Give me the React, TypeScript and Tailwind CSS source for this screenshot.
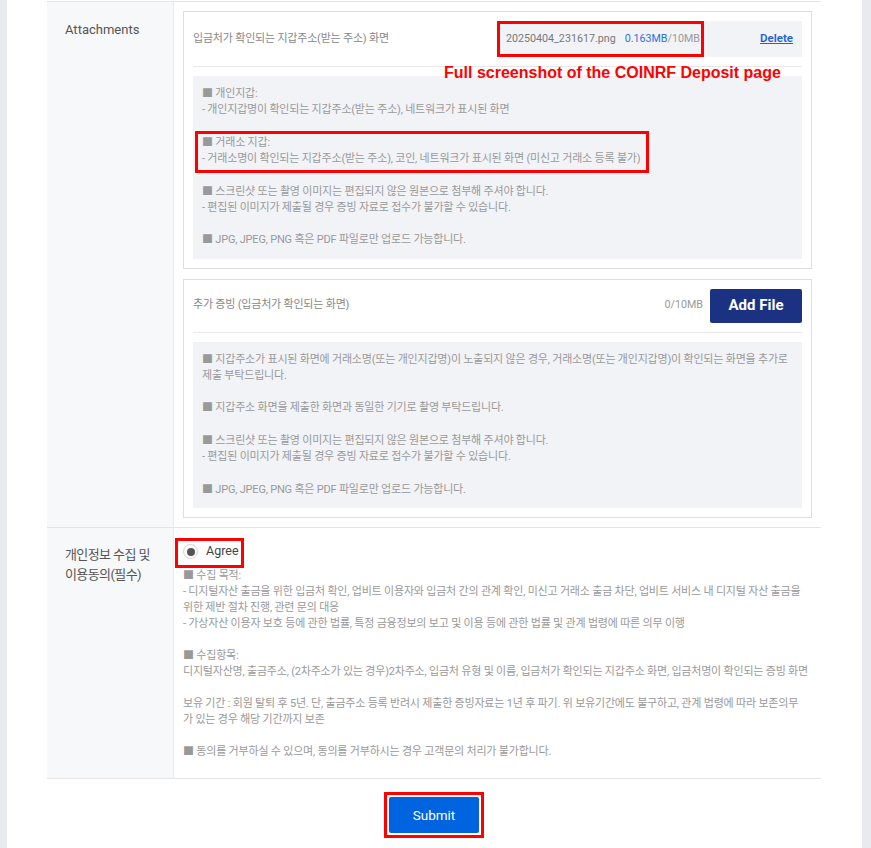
import React from "react";

const FONT = "font-['Roboto','Noto_Sans_CJK_KR',sans-serif]";

const personalWallet = [
  "■ 개인지갑:",
  "- 개인지갑명이 확인되는 지갑주소(받는 주소), 네트워크가 표시된 화면",
  "",
];

const exchangeWallet = [
  "■ 거래소 지갑:",
  "- 거래소명이 확인되는 지갑주소(받는 주소), 코인, 네트워크가 표시된 화면 (미신고 거래소 등록 불가)",
];

const fileRules = [
  "",
  "■ 스크린샷 또는 촬영 이미지는 편집되지 않은 원본으로 첨부해 주셔야 합니다.",
  "- 편집된 이미지가 제출될 경우 증빙 자료로 접수가 불가할 수 있습니다.",
  "",
  "■ JPG, JPEG, PNG 혹은 PDF 파일로만 업로드 가능합니다.",
];

const extraRules = [
  "■ 지갑주소가 표시된 화면에 거래소명(또는 개인지갑명)이 노출되지 않은 경우, 거래소명(또는 개인지갑명)이 확인되는 화면을 추가로",
  "제출 부탁드립니다.",
  "",
  "■ 지갑주소 화면을 제출한 화면과 동일한 기기로 촬영 부탁드립니다.",
  ...fileRules,
];

const privacyLines = [
  "■ 수집 목적:",
  "- 디지털자산 출금을 위한 입금처 확인, 업비트 이용자와 입금처 간의 관계 확인, 미신고 거래소 출금 차단, 업비트 서비스 내 디지털 자산 출금을",
  "위한 제반 절차 진행, 관련 문의 대응",
  "- 가상자산 이용자 보호 등에 관한 법률, 특정 금융정보의 보고 및 이용 등에 관한 법률 및 관계 법령에 따른 의무 이행",
  "",
  "■ 수집항목:",
  "디지털자산명, 출금주소, (2차주소가 있는 경우)2차주소, 입금처 유형 및 이름, 입금처가 확인되는 지갑주소 화면, 입금처명이 확인되는 증빙 화면",
  "",
  "보유 기간 : 회원 탈퇴 후 5년. 단, 출금주소 등록 반려시 제출한 증빙자료는 1년 후 파기. 위 보유기간에도 불구하고, 관계 법령에 따라 보존의무",
  "가 있는 경우 해당 기간까지 보존",
  "",
  "■ 동의를 거부하실 수 있으며, 동의를 거부하시는 경우 고객문의 처리가 불가합니다.",
];

const Lines = ({ lines, tall = false }: { lines: string[]; tall?: boolean }) => (
  <div className="text-[11px] tracking-[-0.2px] text-[#999]">
    {lines.map((line, i) => (
      <div key={i} className={(tall ? "h-[16.25px] leading-[16.25px]" : "h-[16px] leading-[16px]") + " whitespace-nowrap"}>
        {line || "\u00a0"}
      </div>
    ))}
  </div>
);

const AttachmentBox = () => (
  <div className="relative border border-[#dedede] p-[9px]">
    <div className="flex h-[36px] items-center justify-between">
      <span className="text-[11px] tracking-[-0.2px] text-[#888]">입금처가 확인되는 지갑주소(받는 주소) 화면</span>
      <div className="relative flex h-full w-[305px] items-center justify-between bg-[#f2f3f7] px-[9px]">
        <div className="flex items-center gap-[9px] text-[10.7px] whitespace-nowrap">
          <span className="text-[#777]">20250404_231617.png</span>
          <span>
            <span className="text-[#2f6fdc]">0.163MB</span>
            <span className="text-[#999]">/10MB</span>
          </span>
        </div>
        <span className="text-[11.5px] font-semibold text-[#1a62d6] underline">Delete</span>
        <div className="absolute left-0 top-0 h-full w-[207px] border-[3px] border-[#ff0000]" />
      </div>
    </div>
    <div className="my-[9px] h-px bg-[#e8e8e8]" />
    <div className="bg-[#f2f3f7] px-[9px] pt-[10px] pb-[10px]">
      <Lines lines={personalWallet} tall />
      <div className="relative">
        <Lines lines={exchangeWallet} tall />
        <div className="absolute -left-[7px] -top-[4px] h-[42px] w-[454px] border-[3px] border-[#ff0000]" />
      </div>
      <Lines lines={fileRules} tall />
    </div>
    <div className="absolute left-[260px] top-[52px] whitespace-nowrap font-['Liberation_Sans',Arial,sans-serif] text-[16px] font-bold leading-[18px] text-[#ff0000]">
      Full screenshot of the COINRF Deposit page
    </div>
  </div>
);

const ExtraBox = () => (
  <div className="border border-[#dedede] p-[9px]">
    <div className="flex h-[34px] items-center justify-between">
      <span className="text-[11px] tracking-[-0.2px] text-[#888]">추가 증빙 (입금처가 확인되는 화면)</span>
      <div className="flex h-full items-center gap-[7px]">
        <span className="text-[10.7px] text-[#999]">0/10MB</span>
        <button className="h-full w-[92px] rounded-[2px] bg-[#1b3282] text-[15px] font-bold text-white">Add File</button>
      </div>
    </div>
    <div className="my-[9px] h-px bg-[#e8e8e8]" />
    <div className="bg-[#f2f3f7] px-[9px] pt-[10px] pb-[10px]">
      <Lines lines={extraRules} tall />
    </div>
  </div>
);

export default function App() {
  return (
    <div className={`${FONT} min-h-[848px] bg-[#e8eaef] pl-[7px] pr-[9px]`}>
      <div className="min-h-[848px] bg-white pl-[40px] pr-[41px] pt-[1px]">
        <div className="border-y border-[#e5e5e5]">
          <div className="flex border-b border-[#e5e5e5]">
            <div className="w-[127px] shrink-0 border-r border-[#ebebeb] bg-[#f7f8fa] pl-[18px] pt-[18px] text-[13px] text-[#555]">
              Attachments
            </div>
            <div className="flex flex-1 flex-col gap-[10px] pl-[9px] pr-[9px] pt-[9px] pb-[9px]">
              <AttachmentBox />
              <ExtraBox />
            </div>
          </div>
          <div className="flex">
            <div className="w-[127px] shrink-0 border-r border-[#ebebeb] bg-[#f7f8fa] pl-[18px] pt-[17px] text-[13px] leading-[20px] tracking-[-0.6px] text-[#555]">
              <div>개인정보 수집 및</div>
              <div>이용동의(필수)</div>
            </div>
            <div className="flex-1 pl-[9px] pt-[11px] pb-[18px]">
              <div className="relative mb-[6px] inline-flex h-[20px] items-center gap-[8px]">
                <div className="flex h-[15px] w-[15px] items-center justify-center rounded-full border border-[#d3d3d3] bg-white">
                  <div className="h-[8px] w-[8px] rounded-full bg-[#555]" />
                </div>
                <span className="text-[12.5px] text-[#444]">Agree</span>
                <div className="absolute -left-[8px] -top-[4px] h-[30px] w-[69px] border-[3px] border-[#ff0000]" />
              </div>
              <Lines lines={privacyLines} />
            </div>
          </div>
        </div>
        <div className="flex justify-center pt-[18px]">
          <div className="relative">
            <button className="h-[36px] w-[90px] rounded-[2px] bg-[#0063e0] text-[13.5px] text-white">Submit</button>
            <div className="absolute -inset-[5px] border-[3px] border-[#ff0000]" />
          </div>
        </div>
      </div>
    </div>
  );
}
